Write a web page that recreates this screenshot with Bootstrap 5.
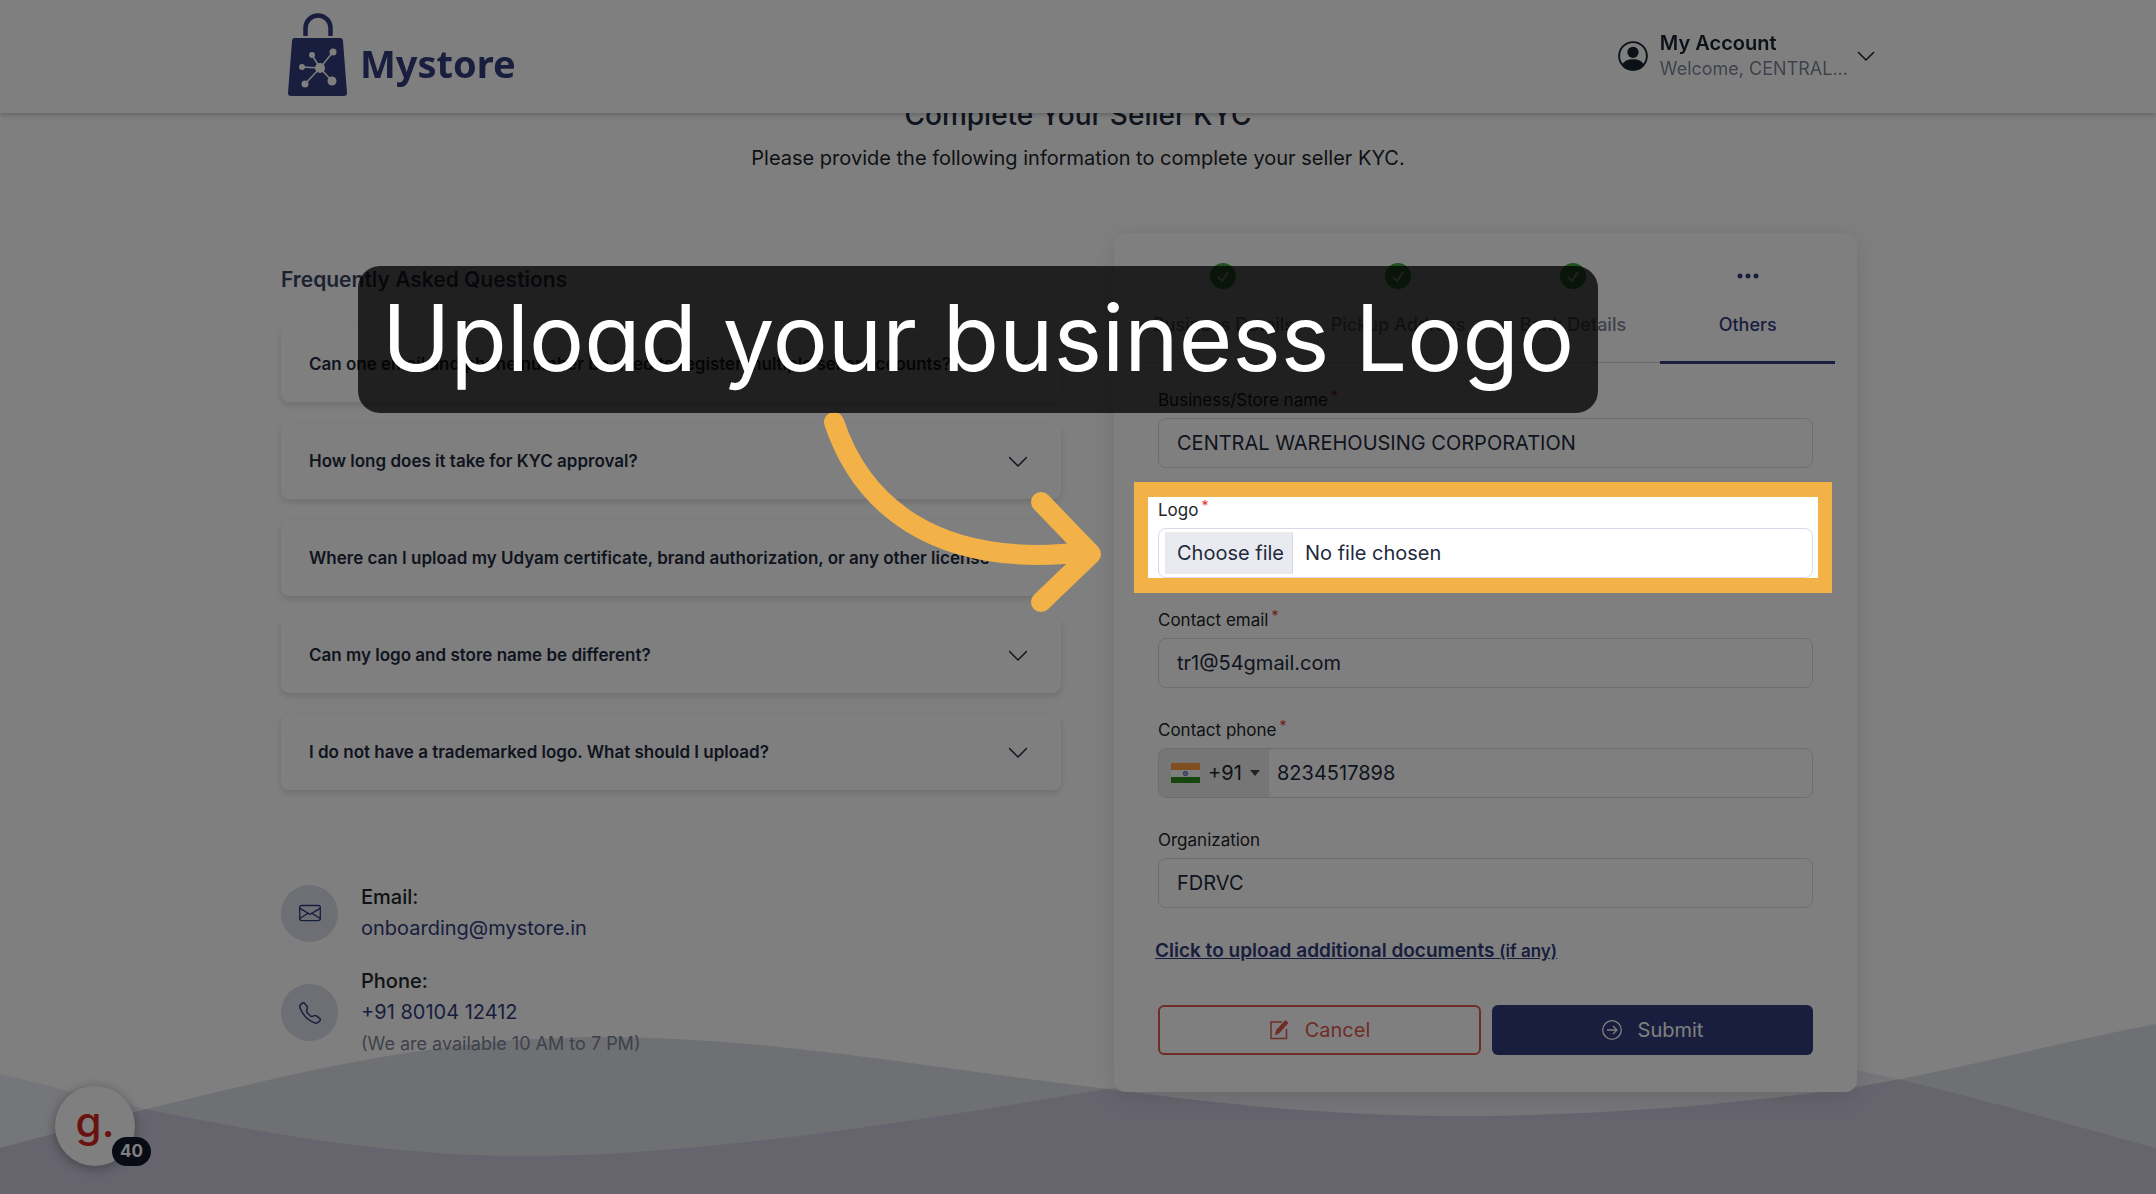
<!DOCTYPE html>
<html lang="en">
<head>
<meta charset="utf-8">
<meta name="viewport" content="width=device-width, initial-scale=1">
<title>Mystore - Seller KYC</title>
<link href="https://cdn.jsdelivr.net/npm/bootstrap@5.3.0/dist/css/bootstrap.min.css" rel="stylesheet">
<style>
:root { --navy: #323c7c; --ink: #1f2a3c; --muted: #7d8496; --line: #d9d9e8; --accent: #f2b247; --shade: rgba(0,0,0,.5); }
body { font-family: Inter, "Liberation Sans", sans-serif; font-size: 20px; line-height: 31px; color: #212529; background: #fff; }
a { color: var(--navy); text-decoration: none; }
.page { position: relative; min-height: 100vh; overflow: hidden; padding-top: 97px; }
.wrap { max-width: 1594px; margin: 0 auto; }
.topbar { height: 113px; background: #fff; box-shadow: 0 2px 5px rgba(0,0,0,.22); }
.brand { padding-left: 7px; gap: 13px; }
.brand svg { margin-top: 13px; }
.brand-name { font: 700 38px/48px "Noto Sans", sans-serif; color: var(--navy); padding-top: 13px; }
.topbar .account { color: #18212f; line-height: 26px; padding: 0 0 2px; }
.account-text { padding: 0 9px 0 12px; font-size: 20px; }
.account b { font-weight: 600; }
.account small { font-size: 18px; color: var(--muted); }
.page-title { font-size: 28px; line-height: 36px; font-weight: 500; color: var(--ink); margin-bottom: 10px; }
.waves { position: absolute; left: 0; bottom: 0; width: 100%; height: 170px; }
.columns { display: grid; grid-template-columns: 780fr 743fr; column-gap: 53px; padding-right: 18px; margin-top: 59px; position: relative; }
.faq-title { font-size: 21px; line-height: 30px; font-weight: 600; color: #3a4560; margin: 32px 0 31px; }
.faq-item { height: 76px; border: 0; border-radius: 8px; background: #fff; box-shadow: 0 3px 7px rgba(0,0,0,.14); padding: 0 34px 0 28px; font-size: 17px; font-weight: 600; color: var(--ink); text-align: left; }
.faq-list { gap: 21px; }
.support { margin-top: 92px; gap: 22px; }
.support-icon { width: 57px; height: 57px; border-radius: 50%; background: #dcdfea; color: var(--navy); margin-right: 23px; }
.support b { font-weight: 500; }
.support small { font-size: 18px; color: var(--muted); }
.kyc-card { background: #fff; border-radius: 12px; box-shadow: 0 4px 24px rgba(0,0,0,.12); padding: 0 22px 37px; }
.steps { border-bottom: 1px solid #cfd2dc; height: 130px; margin-bottom: 25px; }
.step { flex: 1 1 0; font-size: 18px; font-weight: 500; line-height: 26px; color: var(--muted); gap: 23px; padding-top: 30px; border-bottom: 3px solid transparent; margin-bottom: -2px; }
.step.active { color: var(--navy); border-color: var(--navy); }
.fields { padding: 0 22px; }
.field { margin-bottom: 30px; }
.field label.caption { display: block; font-size: 17px; line-height: 24px; margin-bottom: 6px; color: #212529; }
.req { color: #e5322d; font-size: 14px; line-height: 14px; position: relative; top: -5px; margin-left: 3px; }
.box, .box.form-control { height: 50px; border: 1px solid var(--line); border-radius: 8px; font-size: 20px; padding: 0 18px; color: var(--ink); background: #fff; }
.spot { position: relative; }
.spot::after { content: ""; position: absolute; z-index: 1040; inset: -16px -19px -15px -24px; border: solid var(--accent); border-width: 15px 14px; box-shadow: 0 0 0 4000px var(--shade); pointer-events: none; }
.file-box.box { padding: 3px 6px; cursor: pointer; }
.file-btn { width: 128px; background: #e9eaef; border-right: 1px solid var(--line); padding-left: 12px; line-height: 42px; margin-right: 12px; white-space: nowrap; }
.dial { width: 110px; background: #ececec; padding-left: 12px; gap: 8px; border: 0; font-size: 20px; color: #212529; }
.dial .caret { border: 5px solid transparent; border-top: 6px solid #444; border-bottom: 0; }
.tel { border: 0; outline: 0; font-size: 20px; color: var(--ink); padding: 0 8px; min-width: 0; background: transparent; }
.more { font-size: 19px; font-weight: 600; text-decoration: underline; line-height: 26px; margin-left: -3px; }
.more small { font-size: 17px; }
.actions { margin-top: 41px; gap: 11px; }
.actions .btn { height: 50px; flex: 1 1 0; border-radius: 6px; font-size: 20px; gap: 16px; padding: 0; }
.btn-quit { border: 2px solid #e05a4e; color: #e05a4e; background: #fff; }
.btn-send { background: var(--navy); color: #fff; }
.guide { position: absolute; z-index: 1030; left: 55px; bottom: 28px; width: 80px; height: 80px; border: 0; border-radius: 50%; background: #fdfffd; box-shadow: 0 2px 12px rgba(0,0,0,.35); color: #d4261c; font: 500 42px/60px Inter, sans-serif; padding: 0 0 8px; }
.guide-count { position: absolute; left: 57px; bottom: 0; width: 39px; height: 29px; border-radius: 15px; background: #101628; color: #fff; font: 700 17px/29px Inter, sans-serif; }
.callout { position: absolute; z-index: 1050; top: 266px; left: calc(50% - 720px); width: 1240px; height: 147px; border-radius: 22px; background: rgba(0,0,0,.75); color: #fff; font-size: 92px; line-height: 144px; text-align: center; white-space: nowrap; font-feature-settings: "cv11"; }
.pointer { position: absolute; z-index: 1049; top: 400px; left: calc(50% - 258px); width: 300px; height: 220px; }
svg { display: block; flex: none; }
</style>
</head>
<body>
<header class="topbar fixed-top">
  <div class="wrap d-flex justify-content-between h-100">
    <a href="#" class="brand d-flex" aria-label="Mystore home">
      <svg width="59" height="83" viewBox="0 0 59 83">
        <path d="M17.500 23V15a12.500 12.500 0 0 1 25 0v8" fill="none" stroke="#323c7c" stroke-width="4.500"/>
        <path d="M7 25h45q3 0 3 3l4 52q0 3-3 3H3q-3 0-3-3L4 28q0-3 3-3z" fill="#323c7c"/>
        <g stroke="#fff" stroke-width="1.500"><path d="M32 55 24 42M32 55 45 39M32 55 14 54M32 55 17 71M32 55 44 68"/></g>
        <g fill="#fff"><circle cx="32" cy="55" r="5"/><circle cx="24" cy="42" r="3"/><circle cx="45" cy="39" r="3.500"/><circle cx="14" cy="54" r="3"/><circle cx="17" cy="71" r="3.500"/><circle cx="44" cy="68" r="4.500"/></g>
      </svg>
      <span class="brand-name align-self-center">Mystore</span>
    </a>
    <button type="button" class="btn border-0 d-flex align-items-center text-start account">
      <svg width="30" height="30" viewBox="0 0 16 16" fill="#18212f"><circle cx="8" cy="8" r="7.400" fill="none" stroke="#18212f"/><circle cx="8" cy="6" r="3"/><path d="M2 13c1-2.500 3.500-3.300 6-3.300s5 .8 6 3.300A8 8 0 0 1 2 13z"/></svg>
      <span class="account-text d-flex flex-column"><b>My Account</b><small>Welcome, CENTRAL...</small></span>
      <svg width="18" height="18" viewBox="0 0 18 18" fill="none" stroke="#18212f" stroke-width="1.500"><path d="m1 5 8 8 8-8"/></svg>
    </button>
  </div>
</header>

<div class="page">
  <svg class="waves" viewBox="0 0 2156 170" preserveAspectRatio="none">
    <defs>
      <path id="waveBack" d="M0 50C55 63 95 74 150 86C280 112 390 132 530 132C690 132 900 100 1100 66C1250 40 1400 18 1560 18C1680 18 1780 33 1857 46C1960 68 2060 98 2156 124V170H0z"/>
      <path id="waveFront" d="M0 124C50 111 100 97 150 84C300 48 440 13 600 13C770 13 930 44 1100 64C1220 80 1330 92 1460 92C1600 92 1740 80 1857 63C1960 45 2060 18 2156 0V170H0z"/>
      <clipPath id="waveClip"><use href="#waveFront"/></clipPath>
    </defs>
    <use href="#waveBack" fill="#ebecf3"/>
    <use href="#waveFront" fill="#dfe1e7"/>
    <use href="#waveBack" fill="#cccadd" clip-path="url(#waveClip)"/>
  </svg>
  <main class="wrap">
    <div class="text-center">
      <h1 class="page-title">Complete Your Seller KYC</h1>
      <p class="mb-0">Please provide the following information to complete your seller KYC.</p>
    </div>
    <div class="columns">
      <section>
        <h2 class="faq-title">Frequently Asked Questions</h2>
        <div class="faq-list d-flex flex-column">
          <button type="button" class="faq-item d-flex align-items-center justify-content-between">Can one email and phone number be used to register multiple seller accounts?<svg width="18" height="18" viewBox="0 0 18 18" fill="none" stroke="#1f2a3c" stroke-width="1.500"><path d="m0 5 9 9 9-9"/></svg></button>
          <button type="button" class="faq-item d-flex align-items-center justify-content-between">How long does it take for KYC approval?<svg width="18" height="18" viewBox="0 0 18 18" fill="none" stroke="#1f2a3c" stroke-width="1.500"><path d="m0 5 9 9 9-9"/></svg></button>
          <button type="button" class="faq-item d-flex align-items-center justify-content-between">Where can I upload my Udyam certificate, brand authorization, or any other license</button>
          <button type="button" class="faq-item d-flex align-items-center justify-content-between">Can my logo and store name be different?<svg width="18" height="18" viewBox="0 0 18 18" fill="none" stroke="#1f2a3c" stroke-width="1.500"><path d="m0 5 9 9 9-9"/></svg></button>
          <button type="button" class="faq-item d-flex align-items-center justify-content-between">I do not have a trademarked logo. What should I upload?<svg width="18" height="18" viewBox="0 0 18 18" fill="none" stroke="#1f2a3c" stroke-width="1.500"><path d="m0 5 9 9 9-9"/></svg></button>
        </div>
        <div class="support d-flex flex-column">
          <div class="d-flex align-items-center">
            <span class="support-icon d-flex align-items-center justify-content-center"><svg width="22" height="22" viewBox="0 0 16 16" fill="currentColor"><path d="M0 4a2 2 0 0 1 2-2h12a2 2 0 0 1 2 2v8a2 2 0 0 1-2 2H2a2 2 0 0 1-2-2V4Zm2-1a1 1 0 0 0-1 1v.217l7 4.200 7-4.200V4a1 1 0 0 0-1-1H2Zm13 2.383-4.708 2.825L15 11.105V5.383Zm-.034 6.876-5.640-3.471L8 9.583l-1.326-.795-5.640 3.470A1 1 0 0 0 2 13h12a1 1 0 0 0 .966-.741ZM1 11.105l4.708-2.897L1 5.383v5.722Z"/></svg></span>
            <div class="d-flex flex-column"><b>Email:</b><a href="mailto:onboarding@mystore.in">onboarding@mystore.in</a></div>
          </div>
          <div class="d-flex align-items-center">
            <span class="support-icon d-flex align-items-center justify-content-center"><svg width="22" height="22" viewBox="0 0 16 16" fill="currentColor"><path d="M3.654 1.328a.678.678 0 0 0-1.015-.063L1.605 2.300c-.483.484-.661 1.169-.450 1.770a17.568 17.568 0 0 0 4.168 6.608 17.569 17.569 0 0 0 6.608 4.168c.601.211 1.286.033 1.770-.450l1.034-1.034a.678.678 0 0 0-.063-1.015l-2.307-1.794a.678.678 0 0 0-.580-.122l-2.190.547a1.745 1.745 0 0 1-1.657-.459L5.482 8.062a1.745 1.745 0 0 1-.460-1.657l.548-2.190a.678.678 0 0 0-.122-.580L3.654 1.328zM1.884.511a1.745 1.745 0 0 1 2.612.163L6.290 2.980c.329.423.445.974.315 1.494l-.547 2.190a.678.678 0 0 0 .178.643l2.457 2.457a.678.678 0 0 0 .644.178l2.189-.547a1.745 1.745 0 0 1 1.494.315l2.306 1.794c.829.645.905 1.870.163 2.611l-1.034 1.034c-.740.740-1.846 1.065-2.877.702a18.634 18.634 0 0 1-7.010-4.420 18.634 18.634 0 0 1-4.420-7.009c-.362-1.030-.037-2.137.703-2.877L1.885.511z"/></svg></span>
            <div class="d-flex flex-column"><b>Phone:</b><a href="tel:+918010412412">+91 80104 12412</a><small>(We are available 10 AM to 7 PM)</small></div>
          </div>
        </div>
      </section>

      <form class="kyc-card">
        <nav class="steps d-flex" aria-label="KYC steps">
          <a href="#" class="step d-flex flex-column align-items-center"><svg width="26" height="26" viewBox="0 0 26 26"><circle cx="13" cy="13" r="13" fill="#4aa546"/><path d="m8 14 4 4 6-9" fill="none" stroke="#fff" stroke-width="2"/></svg>Business Details</a>
          <a href="#" class="step d-flex flex-column align-items-center"><svg width="26" height="26" viewBox="0 0 26 26"><circle cx="13" cy="13" r="13" fill="#4aa546"/><path d="m8 14 4 4 6-9" fill="none" stroke="#fff" stroke-width="2"/></svg>Pickup Address</a>
          <a href="#" class="step d-flex flex-column align-items-center"><svg width="26" height="26" viewBox="0 0 26 26"><circle cx="13" cy="13" r="13" fill="#4aa546"/><path d="m8 14 4 4 6-9" fill="none" stroke="#fff" stroke-width="2"/></svg>Bank Details</a>
          <a href="#" class="step active d-flex flex-column align-items-center"><svg width="26" height="26" viewBox="0 0 26 26" fill="#323c7c"><circle cx="5" cy="13" r="2.500"/><circle cx="13" cy="13" r="2.500"/><circle cx="21" cy="13" r="2.500"/></svg>Others</a>
        </nav>
        <div class="fields">
          <div class="field"><label class="caption" for="store">Business/Store name<span class="req">*</span></label><input id="store" class="form-control box" value="CENTRAL WAREHOUSING CORPORATION"></div>
          <div class="field spot">
            <label class="caption" for="logo">Logo<span class="req">*</span></label>
            <label class="box file-box d-flex" for="logo"><span class="file-btn">Choose file</span><span class="align-self-center">No file chosen</span></label>
            <input type="file" id="logo" class="visually-hidden">
          </div>
          <div class="field"><label class="caption" for="mail">Contact email<span class="req">*</span></label><input id="mail" type="email" class="form-control box" value="tr1@54gmail.com"></div>
          <div class="field"><label class="caption" for="phone">Contact phone<span class="req">*</span></label>
            <div class="box d-flex p-0 overflow-hidden">
              <button type="button" class="dial d-flex align-items-center" aria-label="Country code">
                <svg width="29" height="20" viewBox="0 0 29 20"><path fill="#fff" d="M0 0h29v20H0z"/><path fill="#ff9d42" d="M0 0h29v7H0z"/><path fill="#2f8a1c" d="M0 14h29v6H0z"/><circle cx="14.500" cy="10.500" r="2.300" fill="#9aa0dd" stroke="#4a52b0" stroke-width=".7"/></svg>+91<span class="caret"></span>
              </button>
              <input id="phone" type="tel" class="tel flex-grow-1" value="8234517898">
            </div>
          </div>
          <div class="field"><label class="caption" for="org">Organization</label><input id="org" class="form-control box" value="FDRVC"></div>
          <a href="#" class="more d-block">Click to upload additional documents <small>(if any)</small></a>
          <div class="actions d-flex">
            <button type="button" class="btn btn-quit d-flex align-items-center justify-content-center"><svg width="20" height="20" viewBox="0 0 20 20" fill="none" stroke="currentColor" stroke-width="1.500"><path d="M13 2H2v16.500h15.500V9"/><path d="m7 14 1-4 8.500-9 2 2L10 12.500z" fill="currentColor"/></svg>Cancel</button>
            <button type="submit" class="btn btn-send d-flex align-items-center justify-content-center"><svg width="20" height="20" viewBox="0 0 20 20" fill="none" stroke="currentColor" stroke-width="1.300"><circle cx="10" cy="10" r="9.300"/><path d="M5 10h10M11 6l4 4-4 4"/></svg>Submit</button>
          </div>
        </div>
      </form>
    </div>
  </main>

  <button type="button" class="guide">g.<span class="guide-count">40</span></button>
  <svg class="pointer" viewBox="820 400 300 220" fill="none" stroke="#f2b247" stroke-width="20" stroke-linecap="round" stroke-linejoin="round"><path d="M834 422C860 500 930 570 1085 552M1041 502 1091 554 1041 602"/></svg>
  <div class="callout">Upload your business Logo</div>
</div>
<script src="https://cdn.jsdelivr.net/npm/bootstrap@5.3.0/dist/js/bootstrap.bundle.min.js"></script>
</body>
</html>
